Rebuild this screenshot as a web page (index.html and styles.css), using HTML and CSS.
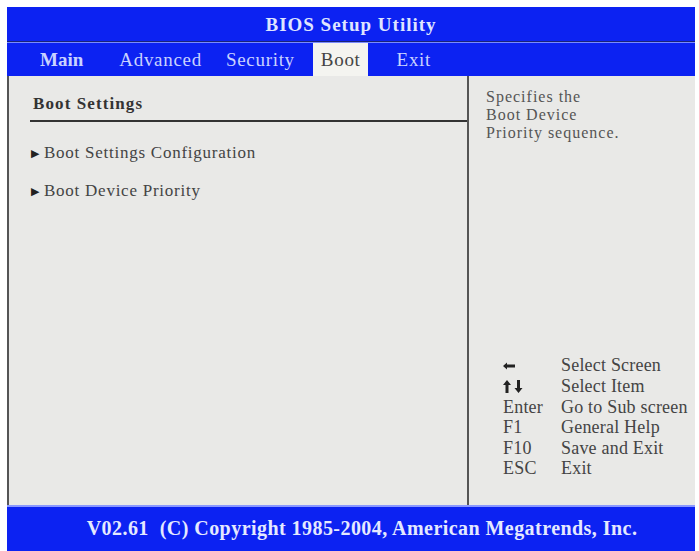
FILE: index.html
```html
<!DOCTYPE html>
<html lang="en">
<head>
    <meta charset="UTF-8">
    <title>BIOS Setup Utility</title>
    <link rel="stylesheet" href="styles.css">
</head>
<body>
    <div class="screen">
        <div class="title">BIOS Setup Utility</div>
        <div class="menu">
            <span class="tab main">Main</span>
            <span class="tab advanced">Advanced</span>
            <span class="tab security">Security</span>
            <span class="tab boot active">Boot</span>
            <span class="tab exit">Exit</span>
        </div>
        <div class="content">
            <div class="left">
                <div class="section">Boot Settings</div>
                <div class="item"><span class="arrow">&#9654;</span>Boot Settings Configuration</div>
                <div class="item"><span class="arrow">&#9654;</span>Boot Device Priority</div>
            </div>
            <div class="right">
                <div class="help">Specifies the<br>Boot Device<br>Priority sequence.</div>
                <div class="keys">
                    <span class="key">
                        <svg width="12" height="8" viewBox="0 0 12 8"><path d="M0 4 L4 0.5 L4 2.5 L12 2.5 L12 5.5 L4 5.5 L4 7.5 Z" fill="#222"/></svg>
                    </span><span>Select Screen</span>
                    <span class="key">
                        <svg width="22" height="13" viewBox="0 0 22 13"><path d="M4 0 L8 5 L5.5 5 L5.5 13 L2.5 13 L2.5 5 L0 5 Z" fill="#222"/><path d="M14 0 L17 0 L17 8 L19.5 8 L15.5 13 L11.5 8 L14 8 Z" fill="#222"/></svg>
                    </span><span>Select Item</span>
                    <span class="key">Enter</span><span>Go to Sub screen</span>
                    <span class="key">F1</span><span>General Help</span>
                    <span class="key">F10</span><span>Save and Exit</span>
                    <span class="key">ESC</span><span>Exit</span>
                </div>
            </div>
        </div>
        <div class="footer">V02.61&nbsp;&nbsp;(C) Copyright 1985-2004, American Megatrends, Inc.</div>
    </div>
</body>
</html>
```

FILE: styles.css
```css
body {
    margin: 0;
    background: #fff;
    font-family: 'Liberation Serif', 'Times New Roman', serif;
}
.screen {
    margin: 7px 0 0 7px;
    width: 688px;
    height: 544px;
    display: flex;
    flex-direction: column;
}
.title {
    height: 34px;
    background: #0c22f2;
    color: #dfe5ff;
    font-weight: bold;
    font-size: 19px;
    letter-spacing: 1px;
    text-align: center;
    line-height: 35px;
    border-bottom: 1px solid #1a2378;
    box-shadow: 0 1px 0 #7a8cff;
    margin-bottom: 1px;
}
.menu {
    height: 33px;
    background: #0c22f2;
    display: flex;
    align-items: stretch;
    font-size: 19px;
    letter-spacing: 0.7px;
    color: #c9d2ff;
}
.tab {
    display: flex;
    align-items: center;
    padding-top: 1px;
}
.main {
    font-weight: bold;
    letter-spacing: 0;
    margin-left: 33px;
}
.advanced { margin-left: 36px; }
.security { margin-left: 24px; }
.boot { margin-left: 18px; }
.active {
    background: #f4f4f0;
    color: #444;
    padding: 1px 7px 0 8px;
}
.exit { margin-left: 29px; }
.content {
    flex: 1;
    background: #e9e9e7;
    border-left: 2px solid #555;
    display: flex;
}
.left {
    width: 458px;
    border-right: 2px solid #555;
    padding-top: 18px;
}
.section {
    font-weight: bold;
    font-size: 17px;
    letter-spacing: 1.1px;
    color: #333;
    padding: 0 0 6px 3px;
    margin-left: 21px;
    border-bottom: 2px solid #333;
}
.item {
    font-size: 17px;
    letter-spacing: 0.75px;
    color: #444;
    margin: 21px 0 0 22px;
    display: flex;
    align-items: center;
}
.item + .item {
    margin-top: 18px;
}
.arrow {
    font-size: 11px;
    letter-spacing: 0;
    color: #222;
    margin-right: 5px;
}
.right {
    flex: 1;
    display: flex;
    flex-direction: column;
    padding-left: 17px;
}
.help {
    font-size: 16px;
    letter-spacing: 1px;
    line-height: 18px;
    color: #555;
    margin-top: 12px;
}
.keys {
    margin-top: auto;
    margin-bottom: 26px;
    display: grid;
    grid-template-columns: 58px auto;
    font-size: 18px;
    letter-spacing: 0.2px;
    line-height: 20.6px;
    color: #444;
    margin-left: 17px;
}
.key {
    display: flex;
    align-items: center;
}
.footer {
    height: 44px;
    background: #0c22f2;
    color: #e4e9ff;
    font-weight: bold;
    font-size: 20px;
    letter-spacing: 0.45px;
    line-height: 42px;
    text-align: center;
    padding-left: 22px;
    border-top: 2px solid #8a98ff;
}
```
